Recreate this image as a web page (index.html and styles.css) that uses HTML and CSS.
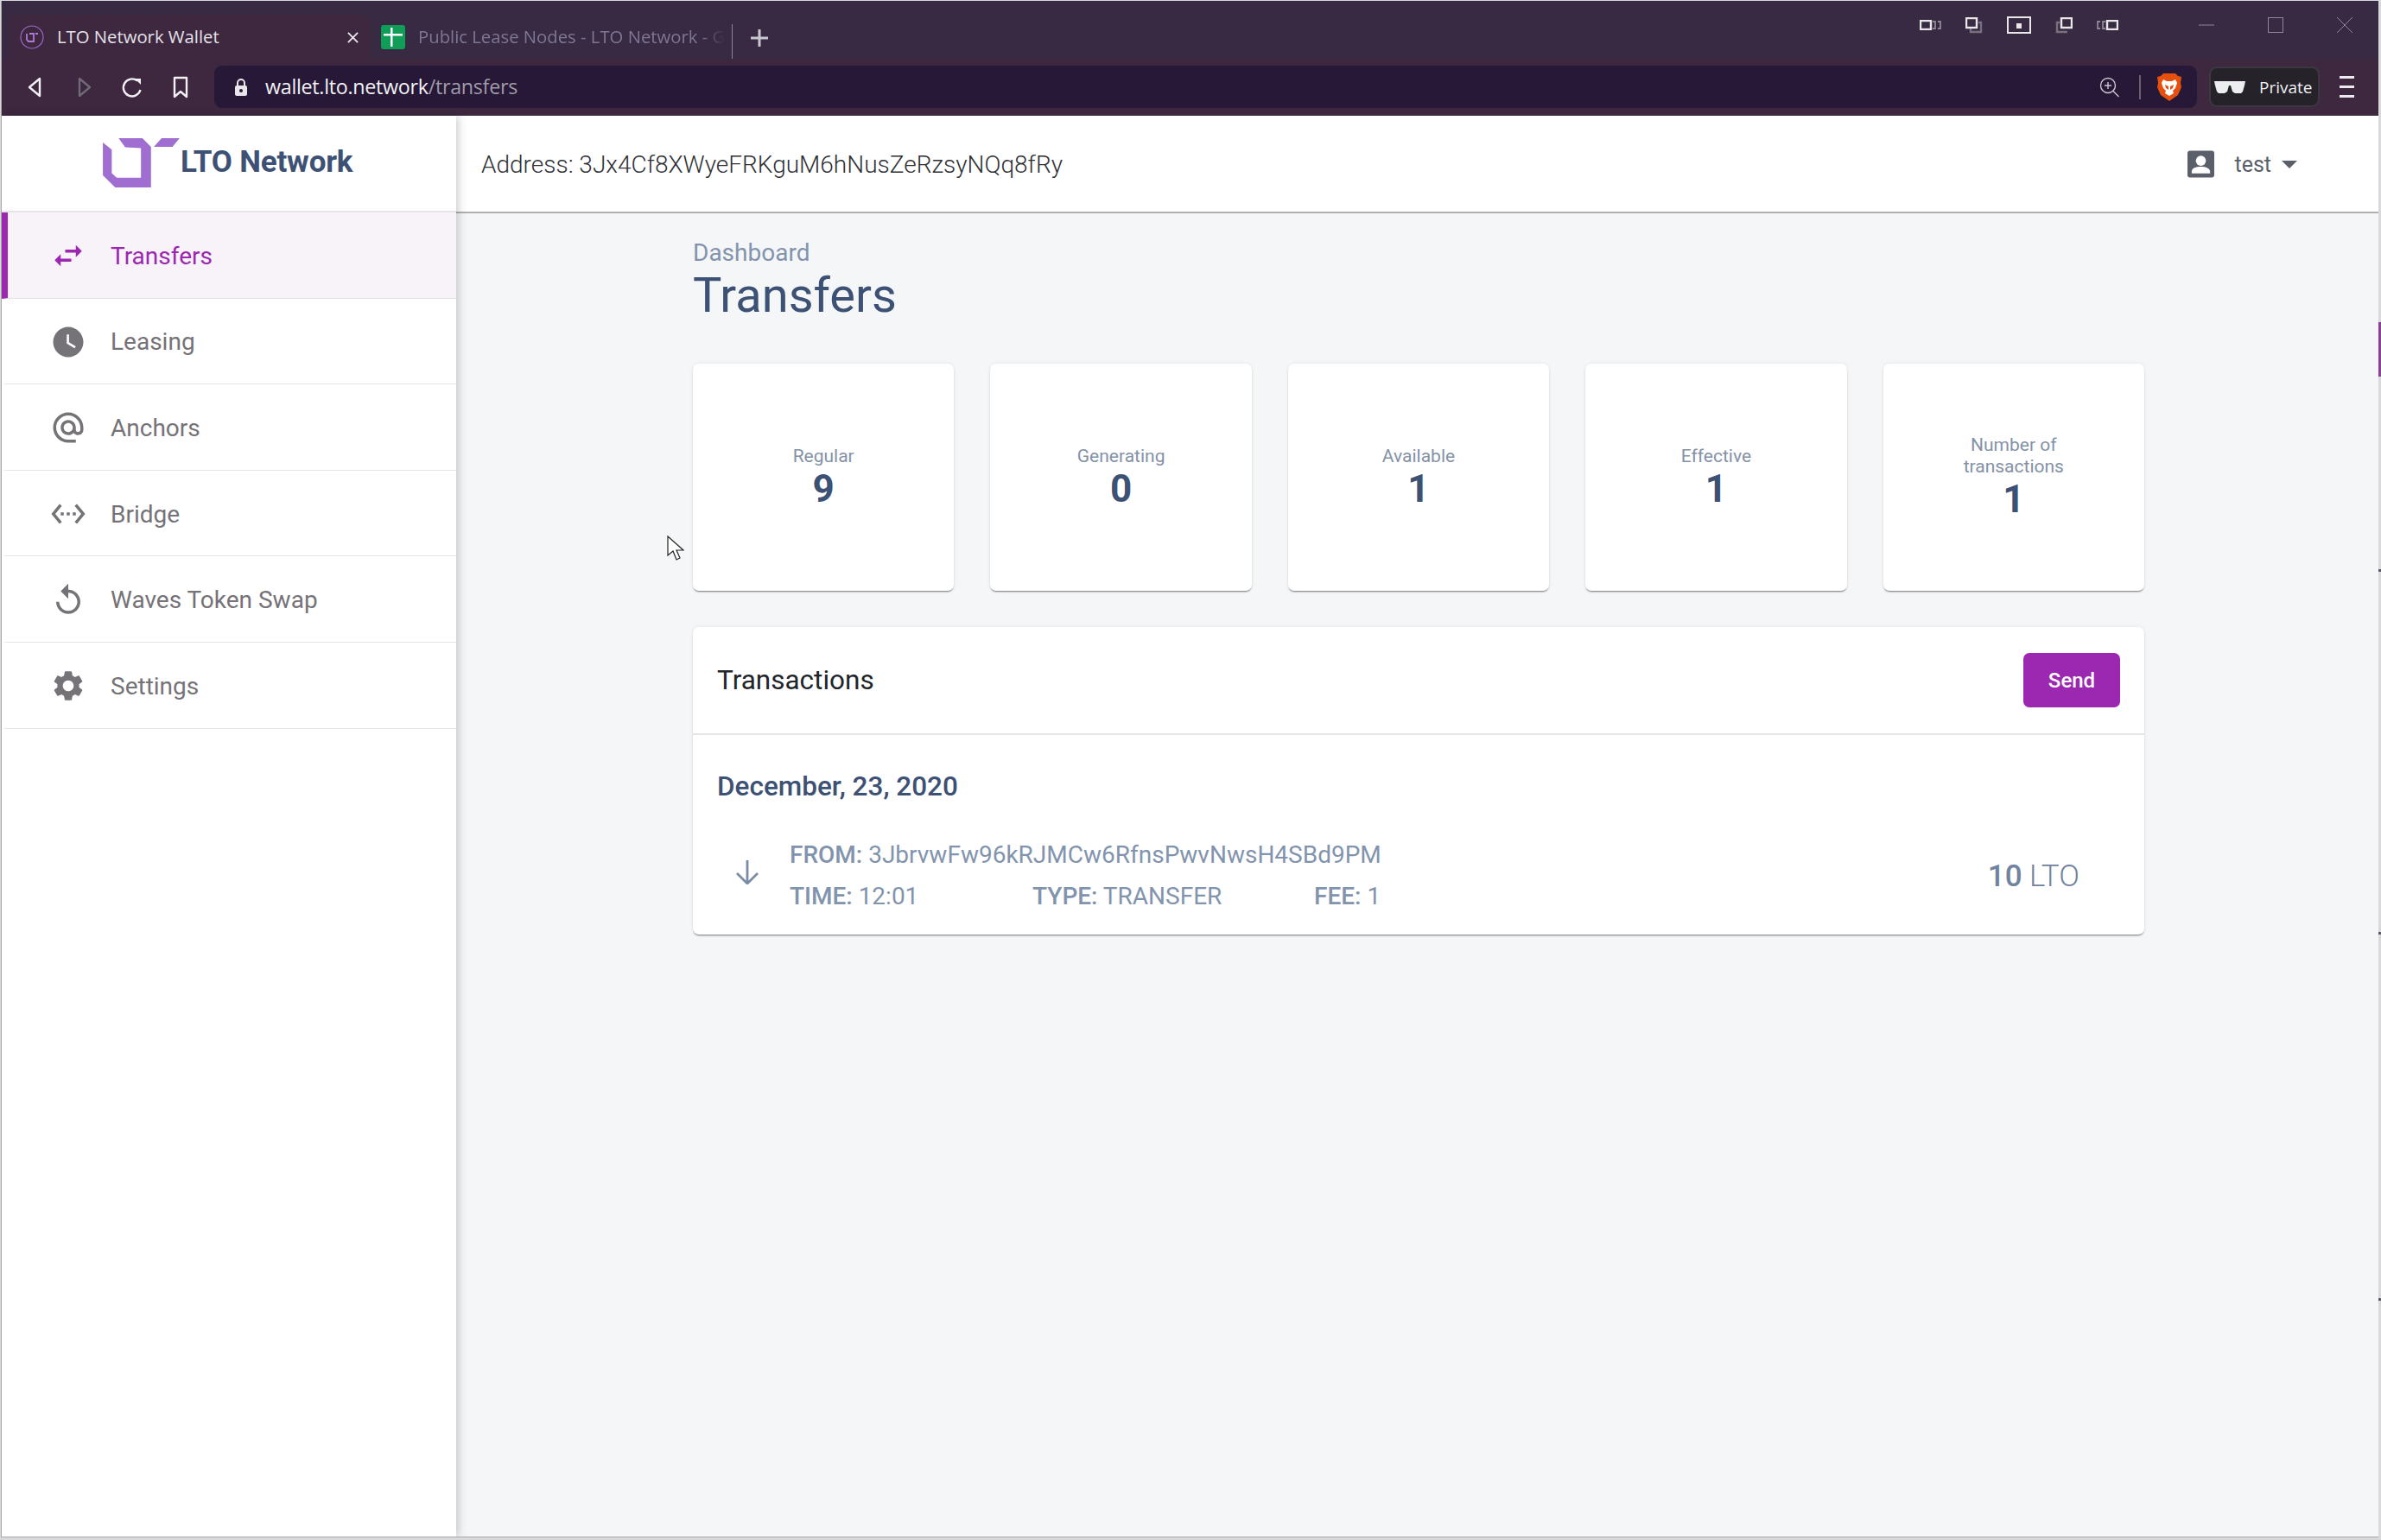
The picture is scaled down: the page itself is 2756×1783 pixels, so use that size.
FILE: index.html
```html
<!DOCTYPE html>
<html lang="en">

<head>
  <meta charset="UTF-8">
  <title>LTO Network Wallet</title>
  <link rel="stylesheet" href="styles.css">
</head>

<body>
  <div class="window">

    <!-- browser tabs -->
    <div class="titlebar">
      <div class="tab tab-active">
        <svg class="favicon" viewBox="0 0 28 28">
          <circle cx="14" cy="14" r="13" fill="none" stroke="#a066c8" stroke-width="1.2" />
          <path d="M8 10v7l2 2h6v-9h-5M18 10h3" fill="none" stroke="#b07ad8" stroke-width="1.8" />
        </svg>
        <span class="tab-title">LTO Network Wallet</span>
        <svg class="tab-close" viewBox="0 0 14 14">
          <path d="M1 1l12 12M13 1L1 13" stroke="#e8e6ea" stroke-width="2" />
        </svg>
      </div>
      <div class="tab tab-other">
        <svg class="sheet" viewBox="0 0 28 28">
          <rect width="28" height="28" rx="3" fill="#0f9d58" />
          <path d="M11 3h2.5v7H25v2.5H13.500V25H11V12.500H3V10h8z" fill="#fff" />
        </svg>
        <span class="tab-title tab-fade">Public Lease Nodes - LTO Network - G</span>
      </div>
      <div class="tab-sep"></div>
      <svg class="tab-plus" viewBox="0 0 20 20">
        <path d="M10 0v20M0 10h20" stroke="#c9c6cf" stroke-width="3" />
      </svg>

      <div class="win-tools">
        <svg class="wt wt-a" viewBox="0 0 25 12">
          <rect x="1" y="1" width="12" height="10" fill="#3a2b44" stroke="#e8e8e8" stroke-width="2.4" />
          <path d="M15 2h3v8h-3M21 2h3v8h-3" fill="none" stroke="#8d8695" stroke-width="1.8" />
        </svg>
        <svg class="wt wt-b" viewBox="0 0 20 19">
          <path d="M6 13v4h12V6h-3" fill="none" stroke="#77707f" stroke-width="2.4" />
          <rect x="1" y="1" width="12" height="11" fill="#3a2b44" stroke="#e8e8e8" stroke-width="2.4" />
        </svg>
        <svg class="wt wt-c" viewBox="0 0 28 20">
          <rect x="1" y="1" width="26" height="18" fill="none" stroke="#e8e8e8" stroke-width="2" />
          <rect x="11" y="8" width="6" height="6" fill="#e8e8e8" />
        </svg>
        <svg class="wt wt-b" viewBox="0 0 20 19">
          <path d="M14 17H2V6h3" fill="none" stroke="#77707f" stroke-width="2.4" />
          <rect x="7" y="1" width="12" height="11" fill="#3a2b44" stroke="#e8e8e8" stroke-width="2.4" />
        </svg>
        <svg class="wt wt-a" viewBox="0 0 25 12">
          <path d="M4 2H1v8h3M10 2H7v8h3" fill="none" stroke="#8d8695" stroke-width="1.8" />
          <rect x="12" y="1" width="12" height="10" fill="#3a2b44" stroke="#e8e8e8" stroke-width="2.4" />
        </svg>
      </div>

      <div class="win-buttons">
        <svg viewBox="0 0 18 18"><path d="M0 9h18" stroke="#8f8797" /></svg>
        <svg viewBox="0 0 18 18"><rect x=".5" y=".5" width="17" height="17" fill="none" stroke="#8f8797" /></svg>
        <svg viewBox="0 0 18 18"><path d="M0 0l18 18M18 0L0 18" stroke="#8f8797" /></svg>
      </div>
    </div>

    <!-- browser toolbar -->
    <div class="toolbar">
      <svg class="nav-icon" viewBox="0 0 28 28">
        <path d="M19 4v20L7 14z" fill="none" stroke="#f1f0f2" stroke-width="2.4" stroke-linejoin="round" />
      </svg>
      <svg class="nav-icon" viewBox="0 0 28 28">
        <path d="M9 4v20l12-10z" fill="none" stroke="#6f6a75" stroke-width="2.4" stroke-linejoin="round" />
      </svg>
      <svg class="nav-icon" viewBox="0 0 28 28">
        <path d="M20 6.500A10 10 0 1 0 23.500 17" fill="none" stroke="#f1f0f2" stroke-width="2.4" />
        <path d="M17 4h7v7z" fill="#f1f0f2" />
      </svg>
      <svg class="nav-icon" viewBox="0 0 28 28">
        <path d="M7 3h14v22l-7-6-7 6z" fill="none" stroke="#f1f0f2" stroke-width="2.4" stroke-linejoin="round" />
      </svg>

      <div class="urlbar">
        <svg class="lock" viewBox="0 0 16 22">
          <path d="M4 9V6a4 4 0 0 1 8 0v3" fill="none" stroke="#e8e6ea" stroke-width="2" />
          <rect x="1" y="9" width="14" height="12" rx="2" fill="#e8e6ea" />
          <circle cx="8" cy="15" r="2" fill="#261836" />
        </svg>
        <span class="url"><span class="url-host">wallet.lto.network</span>/transfers</span>
        <svg class="zoom-icon" viewBox="0 0 24 24">
          <circle cx="10" cy="10" r="8.5" fill="none" stroke="#c9c6cf" stroke-width="1.4" />
          <path d="M15.5 16l7 7M10 6v8M6 10h8" stroke="#c9c6cf" stroke-width="1.4" />
        </svg>
        <div class="url-sep"></div>
        <svg class="brave" viewBox="0 0 28 32">
          <path d="M7 0h14l3 3 4 1-1 7 1 5-4 9-10 7-10-7-4-9 1-5-1-7 4-1z" fill="#e5500f" />
          <path d="M7 7l4 2h6l4-2 2 4-2 6-3 3 1 3-5 3-5-3 1-3-3-3-2-6z" fill="#fff" />
          <path d="M9 13l4 2v4l-3-2zM19 13l-4 2v4l3-2z" fill="#e5500f" />
        </svg>
      </div>

      <div class="private">
        <svg class="glasses" viewBox="0 0 36 14">
          <path d="M0 0h36l-1 5-2 7-2 2h-7l-3-2-2-7h-2l-2 7-3 2H5l-2-2-2-7z" fill="#eceef0" />
        </svg>
        <span>Private</span>
      </div>
      <div class="hamburger"><i></i><i></i><i></i></div>
    </div>

    <!-- page -->
    <div class="page">
      <aside class="sidebar">
        <div class="brand">
          <svg class="logo" viewBox="57 60 268 172">
            <path d="M57 75l31 25v82l17 16h85V95l-55-3-23-32h83l30 30v142H100l-43-42z" fill="#a06dd0" />
            <path d="M262 60h63l-25 30h-65z" fill="#a06dd0" />
          </svg>
          <span class="brand-name">LTO Network</span>
        </div>
        <a class="nav-item active">
          <svg viewBox="0 0 24 24"><path d="M6.99 11L3 15l3.99 4v-3H14v-2H6.99v-3zM21 9l-3.99-4v3H10v2h7.01v3L21 9z" /></svg>
          Transfers
        </a>
        <a class="nav-item">
          <svg viewBox="0 0 24 24"><path d="M12 2C6.5 2 2 6.5 2 12s4.5 10 10 10 10-4.5 10-10S17.5 2 12 2zm4.2 14.2L11 13V7h1.5v5.2l4.5 2.7-.8 1.3z" /></svg>
          Leasing
        </a>
        <a class="nav-item">
          <svg viewBox="0 0 24 24"><path d="M12 2C6.48 2 2 6.48 2 12s4.48 10 10 10h5v-2h-5c-4.34 0-8-3.66-8-8s3.66-8 8-8 8 3.66 8 8v1.43c0 .79-.71 1.57-1.5 1.57s-1.5-.78-1.5-1.57V12c0-2.76-2.24-5-5-5s-5 2.24-5 5 2.24 5 5 5c1.38 0 2.64-.56 3.54-1.47.65.89 1.77 1.47 2.96 1.47 1.97 0 3.5-1.6 3.5-3.57V12c0-5.52-4.48-10-10-10zm0 13c-1.66 0-3-1.34-3-3s1.34-3 3-3 3 1.34 3 3-1.34 3-3 3z" /></svg>
          Anchors
        </a>
        <a class="nav-item">
          <svg viewBox="0 0 24 24"><path d="M7.77 6.76L6.23 5.48.82 12l5.41 6.52 1.54-1.28L3.42 12l4.35-5.24zM7 13h2v-2H7v2zm10-2h-2v2h2v-2zm-6 2h2v-2h-2v2zm6.77-7.52l-1.54 1.28L20.58 12l-4.35 5.24 1.54 1.28L23.18 12l-5.41-6.52z" /></svg>
          Bridge
        </a>
        <a class="nav-item">
          <svg viewBox="0 0 24 24"><path d="M12 5V1L7 6l5 5V7c3.31 0 6 2.69 6 6s-2.69 6-6 6-6-2.69-6-6H4c0 4.42 3.58 8 8 8s8-3.58 8-8-3.58-8-8-8z" /></svg>
          Waves Token Swap
        </a>
        <a class="nav-item">
          <svg viewBox="0 0 24 24"><path d="M19.14 12.94c.04-.3.06-.61.06-.94 0-.32-.02-.64-.07-.94l2.03-1.58c.18-.14.23-.41.12-.61l-1.92-3.32c-.12-.22-.37-.29-.59-.22l-2.39.96c-.5-.38-1.03-.7-1.62-.94l-.36-2.54c-.04-.24-.24-.41-.48-.41h-3.84c-.24 0-.43.17-.47.41l-.36 2.54c-.59.24-1.13.57-1.62.94l-2.39-.96c-.22-.08-.47 0-.59.22L2.74 8.87c-.12.21-.08.47.12.61l2.03 1.58c-.05.3-.09.63-.09.94s.02.64.07.94l-2.03 1.58c-.18.14-.23.41-.12.61l1.92 3.32c.12.22.37.29.59.22l2.39-.96c.5.38 1.03.7 1.62.94l.36 2.54c.05.24.24.41.48.41h3.84c.24 0 .44-.17.47-.41l.36-2.54c.59-.24 1.13-.56 1.62-.94l2.39.96c.22.08.47 0 .59-.22l1.92-3.32c.12-.22.07-.47-.12-.61l-2.01-1.58zM12 15.6c-1.98 0-3.6-1.62-3.6-3.6s1.62-3.6 3.6-3.6 3.6 1.62 3.6 3.6-1.62 3.6-3.6 3.6z" /></svg>
          Settings
        </a>
      </aside>

      <div class="main">
        <header class="topbar">
          <span class="address">Address: 3Jx4Cf8XWyeFRKguM6hNusZeRzsyNQq8fRy</span>
          <div class="user">
            <svg class="user-icon" viewBox="0 0 32 32">
              <rect width="32" height="32" rx="3" fill="#5a5f6a" />
              <circle cx="16" cy="12" r="6" fill="#fff" />
              <path d="M5 27v-2c0-4 5-6 11-6s11 2 11 6v2z" fill="#fff" />
            </svg>
            <span>test</span>
            <i class="caret"></i>
          </div>
        </header>

        <div class="content">
          <div class="crumb">Dashboard</div>
          <h1 class="title">Transfers</h1>

          <div class="stats">
            <div class="stat">
              <div class="stat-label">Regular</div>
              <div class="stat-value">9</div>
            </div>
            <div class="stat">
              <div class="stat-label">Generating</div>
              <div class="stat-value">0</div>
            </div>
            <div class="stat">
              <div class="stat-label">Available</div>
              <div class="stat-value">1</div>
            </div>
            <div class="stat">
              <div class="stat-label">Effective</div>
              <div class="stat-value">1</div>
            </div>
            <div class="stat">
              <div class="stat-label">Number of transactions</div>
              <div class="stat-value">1</div>
            </div>
          </div>

          <section class="panel">
            <div class="panel-head">
              <span class="panel-title">Transactions</span>
              <button class="send">Send</button>
            </div>
            <div class="panel-body">
              <div class="tx-date">December, 23, 2020</div>
              <div class="tx">
                <svg class="tx-arrow" viewBox="0 0 28 28">
                  <path d="M14 0v27M2 15l12 12 12-12" fill="none" stroke="#7b8ca6" stroke-width="2.8" />
                </svg>
                <div class="tx-info">
                  <div><b>FROM:</b> 3JbrvwFw96kRJMCw6RfnsPwvNwsH4SBd9PM</div>
                  <div class="tx-meta">
                    <span><b>TIME:</b> 12:01</span>
                    <span><b>TYPE:</b> TRANSFER</span>
                    <span><b>FEE:</b> 1</span>
                  </div>
                </div>
                <div class="tx-amount"><b>10</b> LTO</div>
              </div>
            </div>
          </section>
        </div>
      </div>
    </div>
  </div>

  <!-- mouse pointer -->
  <svg class="pointer" viewBox="0 0 20 30">
    <path d="M1 1v22l6-5 4 10 4-2-4-9h8z" fill="#fff" stroke="#222" stroke-width="1.2" />
  </svg>

  <!-- bits of the desktop behind the window -->
  <div class="edge edge-purple"></div>
  <div class="edge edge-a"></div>
  <div class="edge edge-b"></div>
  <div class="edge edge-c"></div>
</body>

</html>
```

FILE: styles.css
```css
* {
  box-sizing: border-box;
}

html,
body {
  margin: 0;
  height: 100%;
  overflow: hidden;
}

body {
  position: relative;
  background: #d9d9dc;
  font-family: "Roboto", "Liberation Sans", sans-serif;
}

.window {
  width: 2752px;
  height: 1779px;
  margin: 1px 0 0 1px;
  border-left: 1px solid #a8a8a8;
  border-bottom: 1px solid #a8a8a8;
  display: flex;
  flex-direction: column;
  overflow: hidden;
}

/* browser chrome */
.titlebar {
  height: 68px;
  flex: none;
  background: #382a43;
  padding: 16px 0 0 7px;
  display: flex;
  align-items: stretch;
  font-family: "Open Sans", "Noto Sans", sans-serif;
  font-size: 20.3px;
}

.tab {
  display: flex;
  align-items: center;
  height: 52px;
}

.tab-active {
  width: 420px;
  background: #3e2840;
  border-radius: 10px 10px 0 0;
  padding: 0 14px 0 14px;
  color: #e4e2e8;
}

.favicon {
  width: 28px;
  height: 28px;
  margin-right: 15px;
  flex: none;
}

.tab-title {
  white-space: nowrap;
  flex: 1;
  margin-top: -2px;
}

.tab-close {
  width: 13px;
  height: 13px;
  flex: none;
}

.tab-other {
  width: 414px;
  padding: 0 4px 0 12px;
  color: #7d7795;
}

.sheet {
  width: 28px;
  height: 28px;
  margin-right: 15px;
  flex: none;
}

.tab-fade {
  flex: none;
  -webkit-mask-image: linear-gradient(to right, #000 92%, transparent 100%);
  mask-image: linear-gradient(to right, #000 92%, transparent 100%);
}

.tab-sep {
  width: 1px;
  height: 40px;
  margin: 11px 0 0 4px;
  background: #8b8595;
}

.tab-plus {
  width: 20px;
  height: 20px;
  margin: 17px 0 0 21px;
}

.win-tools {
  margin-left: 1333px;
  display: flex;
  align-items: center;
  height: 24px;
  filter: blur(.4px);
}

.wt {
  flex: none;
}

.wt-a {
  width: 25px;
  height: 12px;
}

.wt-b {
  width: 20px;
  height: 19px;
}

.wt-c {
  width: 28px;
  height: 20px;
}

.win-tools .wt + .wt {
  margin-left: 28px;
}

.win-buttons {
  margin-left: 93px;
  display: flex;
  gap: 62px;
  height: 18px;
  margin-top: 3px;
}

.win-buttons svg {
  width: 18px;
  height: 18px;
}

.toolbar {
  height: 65px;
  flex: none;
  background: #3e2840;
  padding: 0 0 2px 0;
  display: flex;
  align-items: center;
  color: #e4e2e8;
}

.nav-icon {
  width: 28px;
  height: 28px;
  flex: none;
  margin-left: 28px;
}

.nav-icon:first-child {
  margin-left: 25px;
}

.urlbar {
  width: 2295px;
  height: 49px;
  margin: 0 0 0 25px;
  padding: 0 18px 0 23px;
  background: #261836;
  border-radius: 9px;
  display: flex;
  align-items: center;
  font-family: "Open Sans", "Noto Sans", sans-serif;
}

.lock {
  width: 16px;
  height: 22px;
  flex: none;
}

.url {
  margin: -1px 0 0 20px;
  font-size: 23.3px;
  color: #9f9aa8;
  flex: 1;
  letter-spacing: -.3px;
}

.url-host {
  color: #f2f1f4;
}

.zoom-icon {
  width: 24px;
  height: 24px;
  flex: none;
}

.url-sep {
  width: 2px;
  height: 28px;
  margin: 0 19px 0 22px;
  background: #6a6273;
}

.brave {
  width: 28px;
  height: 32px;
  flex: none;
}

.private {
  width: 128px;
  height: 47px;
  margin-left: 14px;
  background: #252329;
  border: 2px solid #3b3842;
  border-radius: 9px;
  display: flex;
  align-items: center;
  padding-left: 4px;
  color: #f0eff2;
  font-family: "Open Sans", "Noto Sans", sans-serif;
  font-size: 19px;
}

.glasses {
  width: 36px;
  height: 14px;
  margin-right: 16px;
  flex: none;
}

.hamburger {
  margin-left: 23px;
  width: 17px;
  display: flex;
  flex-direction: column;
  gap: 8px;
}

.hamburger i {
  display: block;
  height: 3px;
  background: #eceaf0;
}

/* wallet page */
.page {
  flex: 1;
  display: flex;
  min-height: 0;
  background: #f5f6f8;
}

.sidebar {
  width: 526px;
  flex: none;
  background: #fff;
  box-shadow: 2px 0 10px rgba(0, 0, 0, .22);
  position: relative;
}

.brand {
  height: 112px;
  border-bottom: 2px solid #e6e6e8;
  display: flex;
  align-items: flex-start;
  padding: 26px 0 0 117px;
}

.logo {
  width: 89px;
  height: 57px;
  flex: none;
}

.brand-name {
  margin: 8px 0 0 1px;
  font-size: 35px;
  line-height: 40px;
  font-weight: 700;
  letter-spacing: -.2px;
  color: #3d5175;
}

.nav-item {
  height: 99.6px;
  display: flex;
  align-items: center;
  gap: 28px;
  padding: 2px 0 0 49px;
  border-left: 7px solid transparent;
  border-bottom: 1px solid #e3e3e6;
  font-size: 28px;
  color: #757278;
}

.nav-item svg {
  width: 42px;
  height: 42px;
  flex: none;
  fill: #757278;
}

.nav-item.active {
  border-left-color: #9c27b0;
  background: #f7f3f9;
  color: #9c27b0;
}

.nav-item.active svg {
  fill: #9c27b0;
}

.main {
  flex: 1;
  min-width: 0;
  display: flex;
  flex-direction: column;
}

.topbar {
  height: 113px;
  flex: none;
  background: #fff;
  border-bottom: 2px solid #b0b0b0;
  display: flex;
  align-items: center;
  justify-content: space-between;
  padding: 1px 94px 0 29px;
}

.address {
  font-size: 28px;
  font-weight: 300;
  color: #2f3136;
}

.user {
  display: flex;
  align-items: center;
  font-size: 25px;
  color: #5a5f6a;
}

.user-icon {
  width: 31px;
  height: 32px;
  margin-right: 23px;
}

.caret {
  margin-left: 12px;
  width: 0;
  height: 0;
  border-left: 9px solid transparent;
  border-right: 9px solid transparent;
  border-top: 9px solid #5a5f6a;
}

.content {
  flex: 1;
  width: 1680px;
  margin-left: 274px;
  padding-top: 29px;
}

.crumb {
  font-size: 28px;
  line-height: 34px;
  color: #8294ad;
}

.title {
  margin: 2px 0 0;
  font-size: 56px;
  line-height: 60px;
  font-weight: 400;
  color: #3d5175;
}

.stats {
  margin-top: 49px;
  display: grid;
  grid-template-columns: repeat(5, 1fr);
  gap: 42px;
}

.stat {
  height: 263px;
  padding: 1px 60px 0;
  background: #fff;
  border-radius: 7px;
  box-shadow: 0 2px 2px -1px rgba(0, 0, 0, .5), 0 0 4px rgba(0, 0, 0, .08);
  display: flex;
  flex-direction: column;
  justify-content: center;
  text-align: center;
}

.stat-label {
  font-size: 21px;
  line-height: 25px;
  color: #8492a6;
}

.stat-value {
  font-size: 44px;
  line-height: 50px;
  font-weight: 700;
  color: #3d5175;
}

.panel {
  margin-top: 42px;
  height: 356px;
  background: #fff;
  border-radius: 7px;
  box-shadow: 0 2px 2px -1px rgba(0, 0, 0, .5), 0 0 4px rgba(0, 0, 0, .08);
}

.panel-head {
  height: 125px;
  border-bottom: 2px solid #e5e5e7;
  display: flex;
  align-items: center;
  justify-content: space-between;
  padding: 0 28px;
}

.panel-title {
  font-size: 31.5px;
  color: #212529;
}

.send {
  width: 112px;
  height: 63px;
  border: 0;
  border-radius: 7px;
  background: #9c27b0;
  color: #fff;
  font-family: inherit;
  font-size: 24px;
  font-weight: 500;
}

.panel-body {
  padding: 40px 28px 0;
}

.tx-date {
  font-size: 31.5px;
  line-height: 40px;
  font-weight: 500;
  color: #3d5175;
}

.tx {
  margin-top: 35px;
  display: flex;
  align-items: center;
  font-size: 28px;
  line-height: 48px;
  color: #8294ad;
}

.tx b {
  font-weight: 500;
}

.tx-arrow {
  width: 28px;
  height: 28px;
  margin: 0 35px 8px 21px;
  flex: none;
}

.tx-info {
  flex: 1;
}

.tx-meta {
  display: grid;
  grid-template-columns: 281px 326px auto;
}

.tx-amount {
  margin: 2px 47px 0 0;
  font-size: 35px;
  font-weight: 300;
  color: #71839e;
}

/* over the page */
.pointer {
  position: absolute;
  left: 772px;
  top: 620px;
  width: 20px;
  height: 30px;
}

.edge {
  position: absolute;
  right: 0;
  width: 3px;
}

.edge-purple {
  top: 373px;
  height: 63px;
  background: #8a3f9c;
}

.edge-a {
  top: 659px;
  height: 3px;
  background: #5a5a68;
}

.edge-b {
  top: 1079px;
  height: 3px;
  background: #5a5a68;
}

.edge-c {
  top: 1503px;
  height: 3px;
  background: #5a5a68;
}
```
